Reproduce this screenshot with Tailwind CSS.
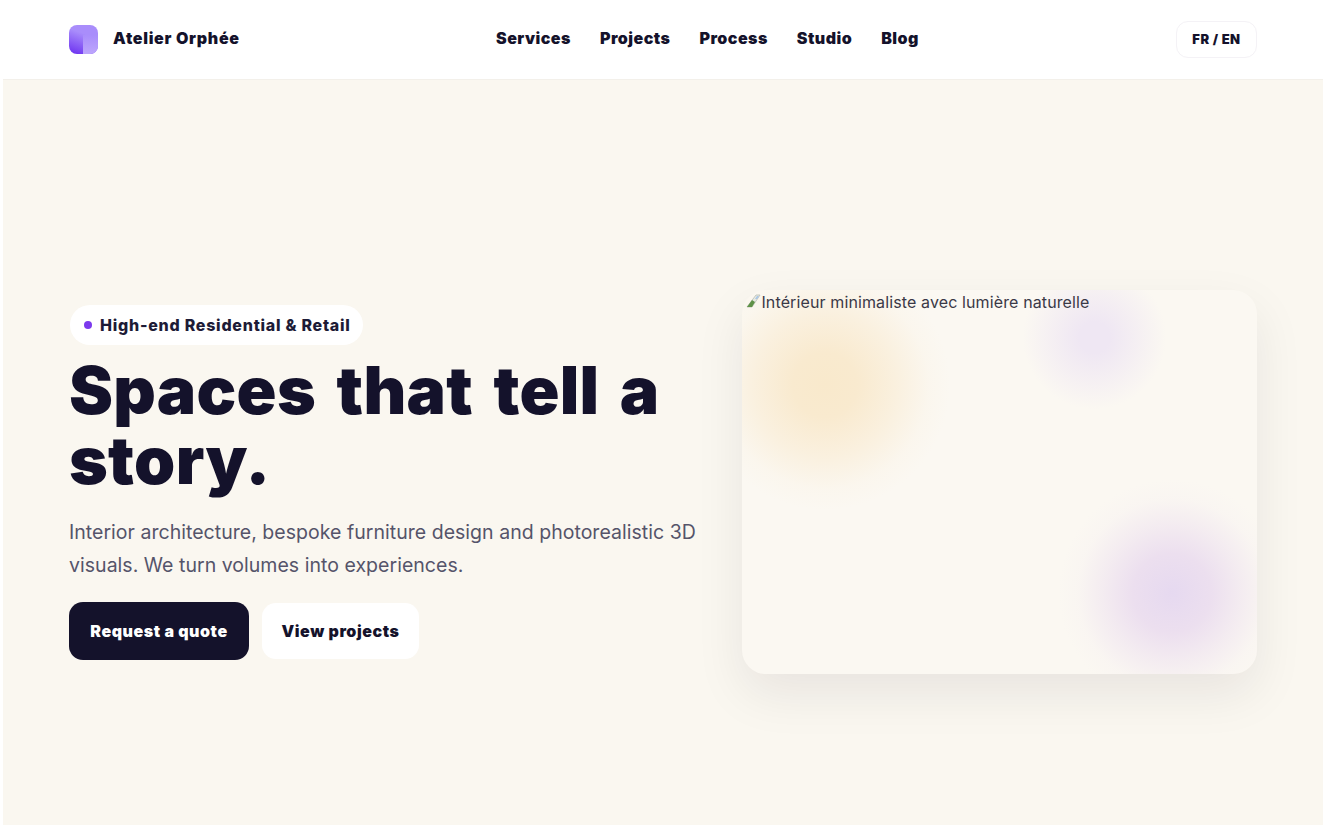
<!doctype html>
<html lang="en">
<head>
<meta charset="utf-8">
<title>Atelier Orphée</title>
<script src="https://cdn.jsdelivr.net/npm/@tailwindcss/browser@4"></script>
</head>
<body class="bg-white font-['Inter',sans-serif] [font-optical-sizing:none] text-[#14122b]">
<div class="h-[825px] overflow-hidden px-[3px]">
  <header class="h-[80px] border-b border-[#f3f0ea] bg-white px-[66px] flex items-center">
    <div class="w-[427px] flex items-center gap-[15px]">
      <div class="relative w-[29px] h-[29px] rounded-[8px] overflow-hidden bg-[linear-gradient(200deg,#a98dfb_35%,#6a2ef0)]">
        <div class="absolute right-0 bottom-0 w-[15px] h-[19px] bg-[linear-gradient(180deg,#a98dfb,#bda6fc)]"></div>
      </div>
      <span class="pb-[4px] text-[16px] tracking-[0.7px] font-black">Atelier Orphée</span>
    </div>
    <nav class="pb-[4px] flex items-center gap-[29px] text-[16px] tracking-[0.47px] font-black">
      <a>Services</a><a>Projects</a><a>Process</a><a>Studio</a><a>Blog</a>
    </nav>
    <button class="ml-auto w-[81px] h-[37px] rounded-[12px] border border-[#f4f2f6] bg-white text-[13px] tracking-[0.5px] font-black">FR / EN</button>
  </header>
  <main class="bg-[#faf7f0] h-[745px] px-[66px] pt-[210px]">
    <div class="grid grid-cols-[minmax(0,1.2fr)_minmax(0,1fr)] gap-14 items-center">
      <div class="flex flex-col items-start">
        <div class="flex items-center gap-2 h-[40px] pl-[14px] pr-[12px] ml-px rounded-full bg-white text-[16px] tracking-[0.75px] font-extrabold text-[#1d1b36]">
          <span class="w-[8px] h-[8px] rounded-full bg-[#7c3aed]"></span>
          High-end Residential &amp; Retail
        </div>
        <h1 class="mt-[10px] text-[66px] leading-[70px] tracking-[0.3px] [word-spacing:7px] font-black">Spaces that tell a story.</h1>
        <p class="mt-[21px] w-[640px] text-[19.5px] tracking-[0.03px] leading-[33px] text-[#55546a]">Interior architecture, bespoke furniture design and photorealistic 3D visuals. We turn volumes into experiences.</p>
        <div class="mt-[20px] flex items-center gap-[13px]">
          <button class="w-[180px] h-[58px] rounded-[14px] bg-[#14122b] text-white text-[16px] tracking-[0.55px] font-black">Request a quote</button>
          <button class="w-[157px] h-[56px] rounded-[14px] bg-white text-[#14122b] text-[16px] tracking-[0.55px] font-black">View projects</button>
        </div>
      </div>
      <div class="relative h-[384px] rounded-[24px] overflow-hidden bg-[#fbf8f2] shadow-[0_20px_50px_rgba(20,18,43,0.08)]">
        <div class="absolute left-[-45px] top-[-30px] w-[256px] h-[250px] bg-[radial-gradient(circle,#f9e9cc_0%,#f9eacf_18%,rgba(249,234,207,0.55)_40%,rgba(249,234,207,0.12)_58%,rgba(249,234,207,0)_70%)]"></div>
        <div class="absolute left-[280px] top-[-25px] w-[145px] h-[145px] bg-[radial-gradient(circle,#efe7f3_0%,#efe7f3_15%,rgba(239,231,243,0)_70%)]"></div>
        <div class="absolute left-[315px] top-[188px] w-[230px] h-[230px] bg-[radial-gradient(circle,#e6d9f0_0%,#ecdfef_24%,rgba(236,223,239,0.5)_42%,rgba(236,223,239,0.1)_58%,rgba(236,223,239,0)_70%)]"></div>
        <div class="relative flex items-start text-[16px] tracking-[0.12px] leading-[24px] text-[#3a3947]">
          <svg class="mt-[3px] ml-[3px] w-[16px] h-[16px] shrink-0" viewBox="0 0 16 16" aria-hidden="true">
            <path d="M2 14 L11 2 L15 2 L7 14 Z" fill="#e7ebe2" stroke="#b9bdb5" stroke-width="0.8"/>
            <path d="M2 14 L7 7 L10 9 L7 14 Z" fill="#5f9248"/>
            <path d="M10 6 L12 3 L14 3 L12 6 Z" fill="#a9c6e8"/>
          </svg>
          <span>Intérieur minimaliste avec lumière naturelle</span>
        </div>
      </div>
    </div>
  </main>
</div>
</body>
</html>
